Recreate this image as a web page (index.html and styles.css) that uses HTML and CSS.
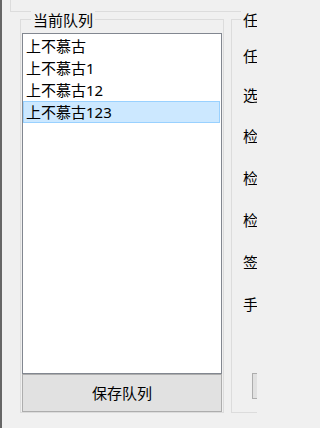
FILE: index.html
```html
<!DOCTYPE html>
<html lang="zh-CN">
<head>
<meta charset="utf-8">
<title>当前队列</title>
<link rel="stylesheet" href="styles.css">
</head>
<body>
<div class="window">
  <div class="top-group"></div>
  <div class="groups">
    <div class="group queue">
      <span class="group-title">当前队列</span>
      <div class="listbox">
        <div class="item">上不慕古</div>
        <div class="item">上不慕古1</div>
        <div class="item">上不慕古12</div>
        <div class="item selected">上不慕古123</div>
      </div>
      <button class="btn save">保存队列</button>
    </div>
    <div class="group task">
      <span class="group-title">任</span>
      <div class="label l1">任</div>
      <div class="label l2">选</div>
      <div class="label l3">检</div>
      <div class="label l4">检</div>
      <div class="label l5">检</div>
      <div class="label l6">签</div>
      <div class="label l7">手</div>
      <div class="btn small"></div>
    </div>
  </div>
</div>
</body>
</html>
```

FILE: styles.css
```css
html, body {
  margin: 0;
  padding: 0;
  background: #f0f0f0;
}
body {
  width: 257px;
  height: 428px;
  overflow: hidden;
  font-family: "Noto Sans", "Noto Sans CJK SC", sans-serif;
  font-size: 15px;
  color: #000;
}
.window {
  width: 255px;
  height: 428px;
  border-left: 2px solid #666;
  overflow: hidden;
}
.top-group {
  margin-left: 8px;
  width: 400px;
  height: 11px;
  border-left: 1px solid #dcdcdc;
  border-bottom: 1px solid #dcdcdc;
}
.groups {
  display: flex;
  margin-top: 7px;
  margin-left: 18px;
  gap: 7px;
}
.group {
  display: flex;
  flex-direction: column;
  border: 1px solid #dcdcdc;
  height: 392px;
  flex: none;
}
.group-title {
  align-self: flex-start;
  margin-top: -10px;
  height: 20px;
  line-height: 20px;
  padding: 0 2px;
  background: #f0f0f0;
  white-space: nowrap;
}
.queue {
  width: 202px;
  padding: 0 1px;
  box-sizing: content-box;
  width: 200px;
}
.queue .group-title {
  margin-left: 9px;
}
.listbox {
  margin-top: 3px;
  width: 200px;
  height: 341px;
  box-sizing: border-box;
  border: 1px solid #828790;
  background: #fff;
  padding: 1px 1px 0 0;
}
.item {
  height: 22px;
  line-height: 22px;
  padding-left: 3px;
  box-sizing: border-box;
  white-space: nowrap;
}
.item.selected {
  background: #cce8ff;
  border: 1px solid #99d1ff;
  line-height: 20px;
  padding-left: 2px;
}
.btn {
  background: #e1e1e1;
  border: 1px solid #adadad;
  box-sizing: border-box;
  font: inherit;
  color: #000;
  padding: 0;
  margin: 0;
}
.save {
  width: 200px;
  height: 38px;
  line-height: 34px;
  text-align: center;
}
.task {
  width: 300px;
  padding-left: 11px;
}
.task .group-title {
  margin-left: -2px;
}
.label {
  height: 20px;
  line-height: 20px;
  white-space: nowrap;
}
.l1 { margin-top: 16px; }
.l2 { margin-top: 19px; }
.l3 { margin-top: 21px; }
.l4 { margin-top: 22px; }
.l5 { margin-top: 22px; }
.l6 { margin-top: 22px; }
.l7 { margin-top: 22px; }
.btn.small {
  margin-top: 59px;
  margin-left: 9px;
  width: 80px;
  height: 26px;
}
```
